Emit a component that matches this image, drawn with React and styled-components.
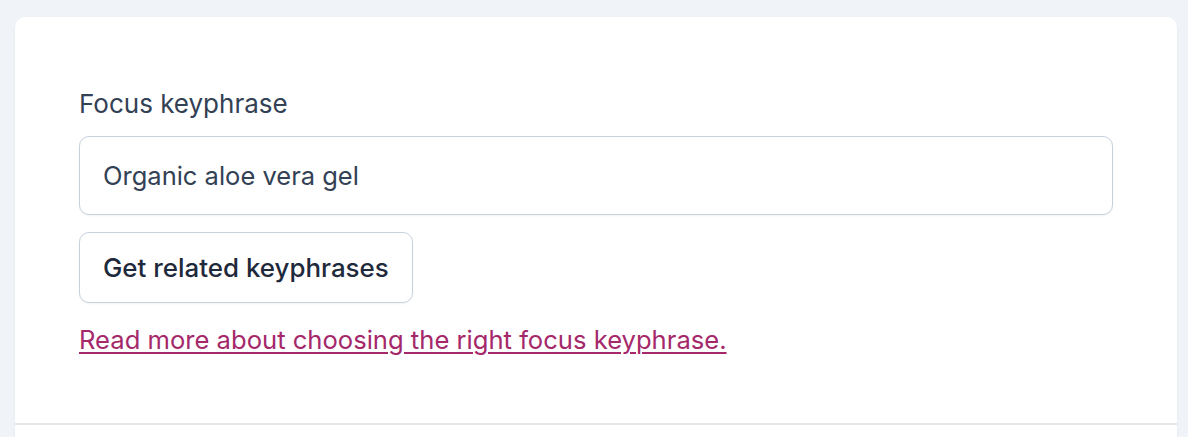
import React from "react";
import styled, { createGlobalStyle } from "styled-components";

const GlobalStyle = createGlobalStyle`
  html, body {
    margin: 0;
    padding: 0;
    background: #f0f3f8;
    font-family: Inter, "Noto Sans", "Liberation Sans", sans-serif;
  }
`;

const Page = styled.div`
  padding: 17px 11px 0 15px;
  height: 437px;
  box-sizing: border-box;
  overflow: hidden;
`;

const Card = styled.div`
  background: #ffffff;
  border-radius: 10px 10px 0 0;
  box-shadow: 0 1px 3px rgba(15, 23, 42, 0.06);
  min-height: 500px;
`;

const Section = styled.div`
  display: flex;
  flex-direction: column;
  align-items: flex-start;
  padding: 71px 64px 67px 64px;
`;

const Label = styled.label`
  font-size: 26px;
  line-height: 32px;
  color: #334155;
  margin-bottom: 16px;
`;

const Input = styled.input`
  box-sizing: border-box;
  width: 1034px;
  height: 79px;
  padding: 0 23px;
  border: 1.5px solid #c8d2df;
  border-radius: 10px;
  font-family: inherit;
  font-size: 25.5px;
  color: #334155;
  background: #fff;
  box-shadow: 0 1px 2px rgba(15, 23, 42, 0.05);
  outline: none;
`;

const Button = styled.button`
  box-sizing: border-box;
  margin-top: 17px;
  height: 71px;
  padding: 0 23px;
  border: 1.5px solid #c8d2df;
  border-radius: 10px;
  background: #fff;
  font-family: inherit;
  font-size: 25.9px;
  font-weight: 500;
  color: #1e293b;
  box-shadow: 0 1px 2px rgba(15, 23, 42, 0.05);
  cursor: pointer;
`;

const Link = styled.a`
  margin-top: 21px;
  font-size: 25.6px;
  line-height: 32px;
  color: #a4286a;
  text-decoration: underline;
  text-underline-offset: 3px;
  text-decoration-thickness: 1.5px;
`;

const Divider = styled.div`
  border-top: 2px solid #e5e7eb;
`;

export default function App() {
  return (
    <>
      <GlobalStyle />
      <Page>
        <Card>
          <Section>
            <Label htmlFor="focus-keyphrase">Focus keyphrase</Label>
            <Input
              id="focus-keyphrase"
              defaultValue="Organic aloe vera gel"
            />
            <Button>Get related keyphrases</Button>
            <Link href="#">
              Read more about choosing the right focus keyphrase.
            </Link>
          </Section>
          <Divider />
        </Card>
      </Page>
    </>
  );
}
